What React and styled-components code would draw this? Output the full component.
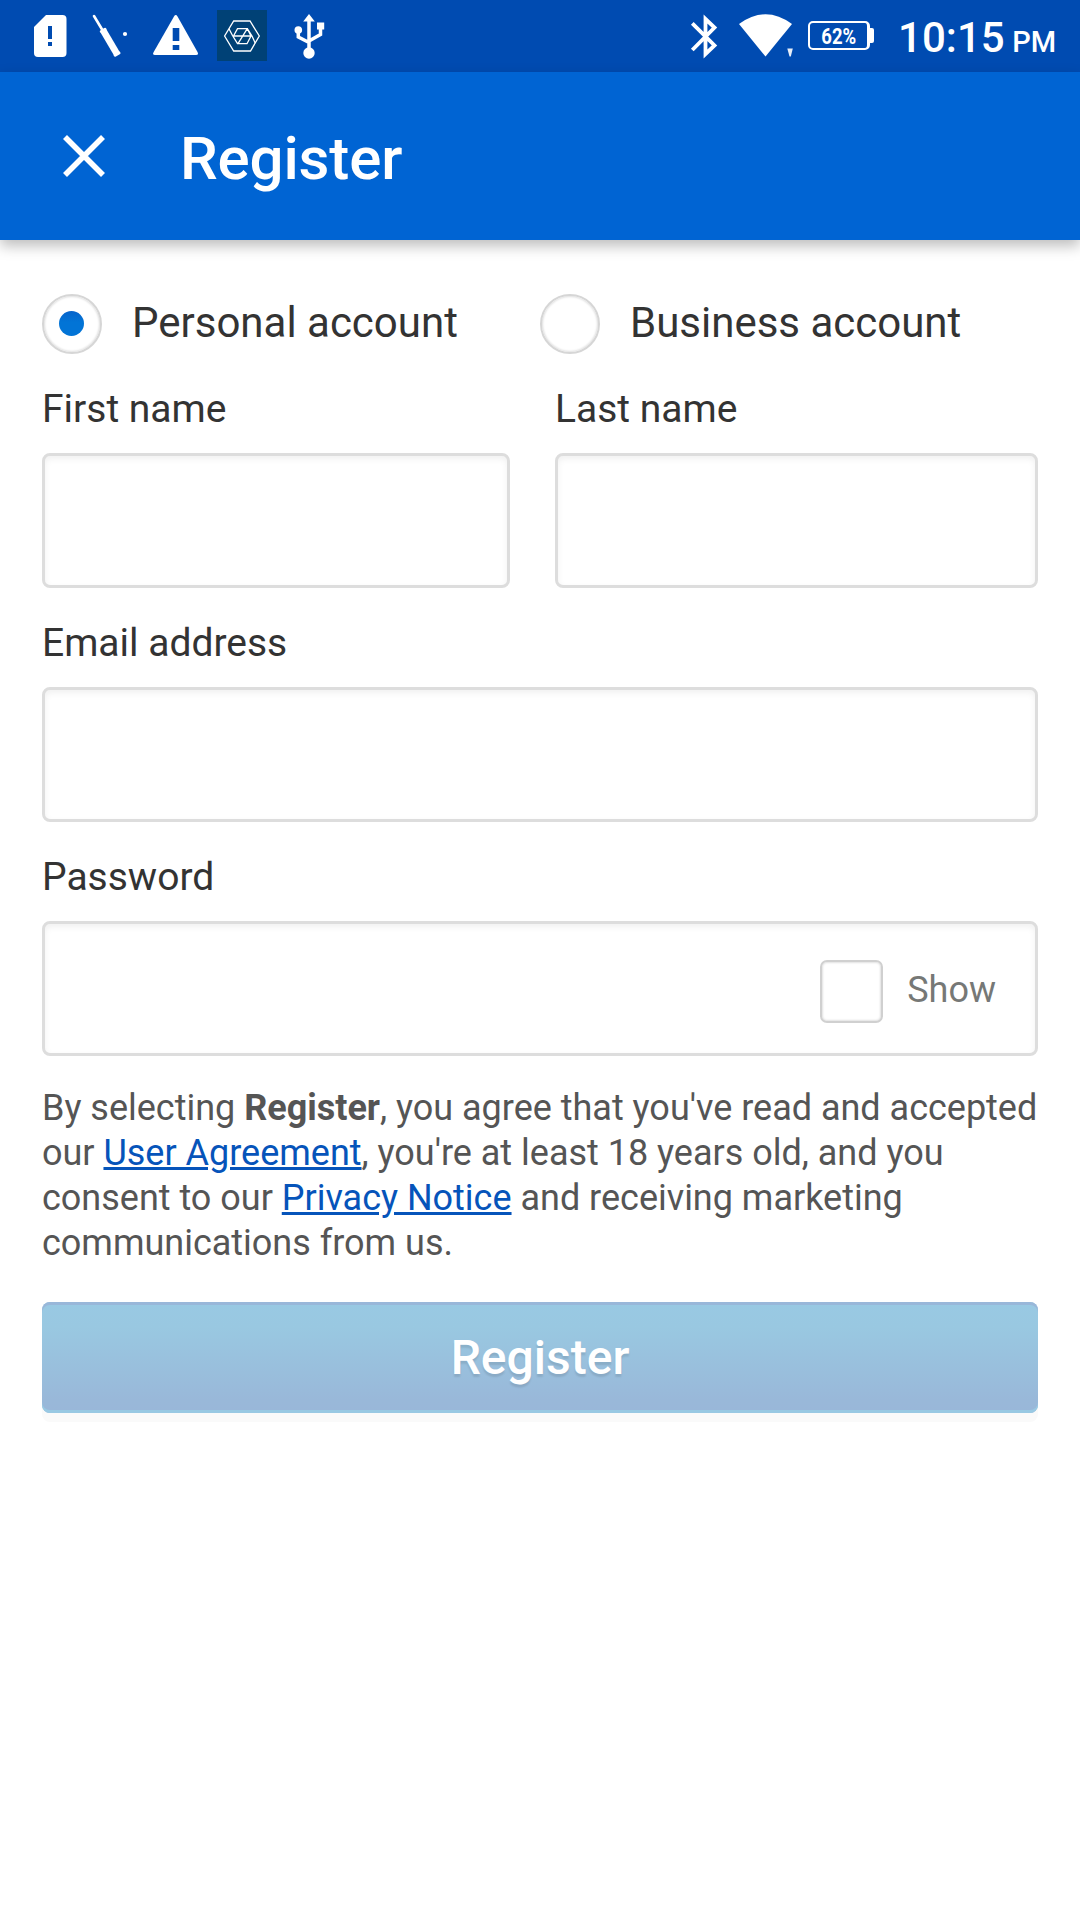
import React, { useState } from "react";
import styled, { createGlobalStyle } from "styled-components";

const GlobalStyle = createGlobalStyle`
  * { box-sizing: border-box; }
  html, body { margin: 0; padding: 0; background: #fff; }
  body { font-family: Roboto, "Liberation Sans", sans-serif; }
`;

const Screen = styled.div`
  width: 1080px;
  height: 1920px;
  display: flex;
  flex-direction: column;
  background: #fff;
  overflow: hidden;
`;

const StatusBar = styled.div`
  height: 72px;
  flex: none;
  display: flex;
  justify-content: space-between;
  padding: 0 24px 0 33px;
  background: #004bb1;
  color: #fff;
`;

const StatusGroup = styled.div`
  display: flex;
  height: 72px;
  svg { display: block; flex: none; }
`;

const Glyph = styled.svg`
  width: ${(p) => p.$w}px;
  height: 72px;
  margin-left: ${(p) => p.$gap || 0}px;
`;

const Battery = styled.div`
  display: flex;
  align-items: center;
  height: 29px;
  margin: 21px 0 0 14px;
`;

const BatteryBody = styled.div`
  width: 62px;
  height: 29px;
  border: 2px solid #fff;
  border-right-width: 3px;
  border-radius: 5px;
  display: flex;
  align-items: center;
  justify-content: center;
  font-size: 22px;
  font-weight: 700;
  line-height: 25px;
`;

const BatteryText = styled.span`
  display: block;
  transform: scaleX(0.84);
  padding-top: 2px;
`;

const BatteryTip = styled.div`
  width: 4px;
  height: 15px;
  background: #fff;
  border-radius: 0 2px 2px 0;
`;

const Clock = styled.div`
  display: flex;
  align-items: baseline;
  margin-left: 24px;
  font-size: 42px;
  font-weight: 500;
  line-height: 75px;
  white-space: nowrap;
`;

const Meridiem = styled.span`
  font-size: 29px;
  margin-left: 7.5px;
`;

const AppBar = styled.header`
  height: 168px;
  flex: none;
  display: flex;
  align-items: center;
  padding-left: 63px;
  background: #0064d3;
  box-shadow: 0 6px 13px rgba(0, 0, 0, 0.26);
`;

const CloseButton = styled.button`
  display: block;
  width: 42px;
  height: 42px;
  padding: 0;
  border: 0;
  background: none;
  svg { display: block; }
`;

const Title = styled.h1`
  margin: 5px 0 0 75px;
  font-size: 60px;
  font-weight: 500;
  line-height: 72px;
  letter-spacing: -0.15px;
  color: #fff;
`;

const Form = styled.main`
  padding: 54px 42px 0;
`;

const Choices = styled.div`
  display: grid;
  grid-template-columns: 498px 498px;
  height: 60px;
`;

const Choice = styled.label`
  display: flex;
  font-size: 42px;
  line-height: 57px;
  color: #333;
`;

const RadioRing = styled.span`
  width: 60px;
  height: 60px;
  margin-right: 30px;
  flex: none;
  display: flex;
  align-items: center;
  justify-content: center;
  padding: 0 1px 1px 0;
  border-radius: 50%;
  border: 2px solid #d6d6d6;
  box-shadow: inset 0 0 2px 1px rgba(0, 0, 0, 0.12);
  background: #fff;
`;

const RadioDot = styled.span`
  width: 25px;
  height: 25px;
  border-radius: 50%;
  background: linear-gradient(180deg, #0663cb 0, #0274d6 45%);
`;

const Fields = styled.div`
  display: grid;
  grid-template-columns: ${(p) => p.$columns || "1fr"};
  column-gap: 45px;
  margin-top: 30px;
`;

const Label = styled.label`
  display: block;
  margin-bottom: 18px;
  font-size: 39px;
  line-height: 51px;
  color: #333;
`;

const Box = styled.div`
  height: 135px;
  display: flex;
  justify-content: flex-end;
  border: 3px solid #ddd;
  border-radius: 8px;
  background: #fff;
  box-shadow: inset 0 3px 6px rgba(0, 0, 0, 0.06);
`;

const Input = styled.input`
  flex: 1;
  min-width: 0;
  border: 0;
  outline: 0;
  padding: 0 24px;
  background: transparent;
  font: inherit;
  font-size: 42px;
`;

const ShowToggle = styled.label`
  display: flex;
  padding: 36px 39px 0 0;
  font-size: 36px;
  line-height: 60px;
  color: #767876;
`;

const Check = styled.span`
  width: 63px;
  height: 63px;
  margin-right: 24px;
  border: 2px solid #d0d0d0;
  border-radius: 7px;
  background: #fff;
  box-shadow: inset 0 0 2px 1px rgba(0, 0, 0, 0.12);
`;

const Legal = styled.p`
  margin: 30px -6px 0 0;
  font-size: 36px;
  line-height: 45px;
  letter-spacing: -0.01px;
  color: #555;
`;

const Link = styled.a`
  color: #0654ba;
  text-decoration: underline;
`;

const Submit = styled.button`
  display: block;
  width: 100%;
  height: 111px;
  margin-top: 36px;
  padding: 0;
  border: 0;
  border-radius: 8px;
  background: linear-gradient(180deg, #99c9e3 0, #99c8e1 25px, #99b8d9 98px, #99b7d9 100%);
  box-shadow: inset 0 3px #99b7d9, inset 0 -3px #99c9e3, 0 9px #fafafa;
  font-family: inherit;
  font-size: 48px;
  font-weight: 500;
  line-height: 111px;
  color: #fff;
  text-shadow: 0 3px 2px rgba(0, 0, 0, 0.1);
`;

const StatusIcons = () => (
  <StatusGroup>
    <Glyph $w={36} viewBox="33 0 36 72" fill="#fff">
      <path d="M46 15H62.5Q66.5 15 66.5 19V53Q66.5 57 62.5 57H38Q34 57 34 53V27Z" />
      <path d="M48 26h4v13h-4zM48 42h4v4h-4z" fill="#004bb1" />
    </Glyph>
    <Glyph $w={38} $gap={22} viewBox="91 0 38 72" fill="none" stroke="#fff">
      <path d="M94 16L103 31" strokeWidth="2.6" strokeLinecap="round" />
      <path d="M103.5 31L117 54" strokeWidth="6.6" strokeLinejoin="round" />
      <path d="M101.3 31.5L105 29.3M115.2 55.2L119 53" strokeWidth="3" strokeLinecap="round" />
      <circle cx="125" cy="34" r="2.1" fill="#fff" stroke="none" />
    </Glyph>
    <Glyph $w={46} $gap={24} viewBox="153 0 46 72" fill="#fff">
      <path d="M174 16.5Q175.7 13.7 177.5 16.5L197.5 52Q199 55 196 55H155Q152 55 153.7 52Z" />
      <path d="M172.7 28h6.6v13h-6.6zM172.7 45h6.6v5h-6.6z" fill="#004bb1" />
    </Glyph>
    <Glyph $w={50} $gap={18} viewBox="217 0 50 72" fill="none" stroke="#fff" strokeWidth="1.3">
      <path d="M217 10h50v51h-50z" fill="#004176" stroke="none" />
      <path d="M233.7 21H250L259.3 36L250.5 51H233.7L224.6 36Z" />
      <path d="M229 28.8L232.5 35.5L237.5 43.7H247L251 36L247.3 28.7H237.5L233.5 36H251M247.3 28.7L238 43.7M247.3 28.7L252 36L255.3 43.2" />
    </Glyph>
    <Glyph $w={31} $gap={27} viewBox="294 0 31 72" fill="none" stroke="#fff" strokeWidth="3.5">
      <path d="M309 19V54M298.3 29V37L309 42.5M320.5 28V34.5L309 41" />
      <path d="M309 14L314.8 21.5H303.2ZM317 22.5h7.2v7H317z" fill="#fff" stroke="none" />
      <circle cx="298.3" cy="30" r="3.8" fill="#fff" stroke="none" />
      <circle cx="309" cy="53" r="5.7" fill="#fff" stroke="none" />
    </Glyph>
  </StatusGroup>
);

const Connectivity = () => (
  <StatusGroup>
    <Glyph $w={28} viewBox="690 0 28 72" fill="none" stroke="#fff" strokeWidth="3.8">
      <path d="M692.3 23.3L714.5 45.5L705.5 54V19L714.5 27.5L692.3 50" />
    </Glyph>
    <Glyph $w={56} $gap={20} viewBox="738 0 56 72" fill="#fff">
      <path d="M739 24Q765.5 4.5 792 24L765.5 56.5Z" />
      <path d="M787.3 48.5H792.8L790.8 56.5H789.5Z" opacity=".9" />
    </Glyph>
    <Battery>
      <BatteryBody><BatteryText>62%</BatteryText></BatteryBody>
      <BatteryTip />
    </Battery>
    <Clock>10:15<Meridiem>PM</Meridiem></Clock>
  </StatusGroup>
);

const TextField = ({ id, label, type = "text", children }) => (
  <div>
    <Label htmlFor={id}>{label}</Label>
    <Box>
      <Input id={id} type={type} />
      {children}
    </Box>
  </div>
);

const Radio = ({ label, selected, onSelect }) => (
  <Choice role="radio" aria-checked={selected} onClick={onSelect}>
    <RadioRing>{selected && <RadioDot />}</RadioRing>
    {label}
  </Choice>
);

export default function App() {
  const [account, setAccount] = useState("personal");
  return (
    <Screen>
      <GlobalStyle />
      <StatusBar>
        <StatusIcons />
        <Connectivity />
      </StatusBar>
      <AppBar>
        <CloseButton aria-label="Close">
          <svg width="42" height="42" viewBox="0 0 42 42" stroke="#fff" strokeWidth="5.6">
            <path d="M2 2L40 40M40 2L2 40" />
          </svg>
        </CloseButton>
        <Title>Register</Title>
      </AppBar>
      <Form>
        <Choices>
          <Radio label="Personal account" selected={account === "personal"} onSelect={() => setAccount("personal")} />
          <Radio label="Business account" selected={account === "business"} onSelect={() => setAccount("business")} />
        </Choices>
        <Fields $columns="468px 483px">
          <TextField id="first" label="First name" />
          <TextField id="last" label="Last name" />
        </Fields>
        <Fields>
          <TextField id="email" label="Email address" />
        </Fields>
        <Fields>
          <TextField id="password" label="Password" type="password">
            <ShowToggle><Check />Show</ShowToggle>
          </TextField>
        </Fields>
        <Legal>
          By selecting <b>Register</b>, you agree that you've read and accepted our{" "}
          <Link>User Agreement</Link>, you're at least 18 years old, and you consent to our{" "}
          <Link>Privacy Notice</Link> and receiving marketing communications from us.
        </Legal>
        <Submit>Register</Submit>
      </Form>
    </Screen>
  );
}
